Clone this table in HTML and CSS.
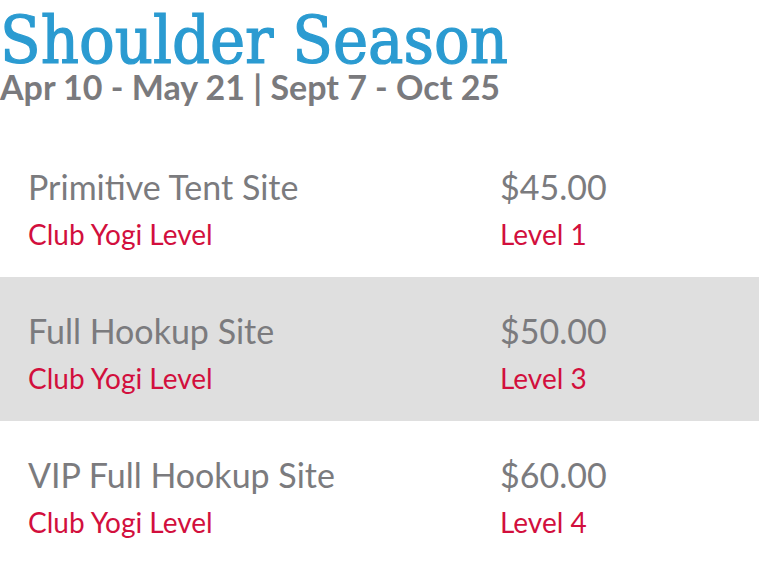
FILE: index.html
```html
<!DOCTYPE html>
<html lang="en">
<head>
<meta charset="utf-8">
<title>Shoulder Season</title>
<link rel="stylesheet" href="styles.css">
</head>
<body>
<header class="season">
  <h1 class="season-title">Shoulder Season</h1>
  <p class="season-dates">Apr 10 - May 21 | Sept 7 - Oct 25</p>
</header>
<section class="rates">
  <div class="rate">
    <div class="rate-col">
      <div class="rate-name">Primitive Tent Site</div>
      <div class="rate-sub">Club Yogi Level</div>
    </div>
    <div class="rate-col">
      <div class="rate-name">$45.00</div>
      <div class="rate-sub">Level 1</div>
    </div>
  </div>
  <div class="rate rate-alt">
    <div class="rate-col">
      <div class="rate-name">Full Hookup Site</div>
      <div class="rate-sub">Club Yogi Level</div>
    </div>
    <div class="rate-col">
      <div class="rate-name">$50.00</div>
      <div class="rate-sub">Level 3</div>
    </div>
  </div>
  <div class="rate">
    <div class="rate-col">
      <div class="rate-name">VIP Full Hookup Site</div>
      <div class="rate-sub">Club Yogi Level</div>
    </div>
    <div class="rate-col">
      <div class="rate-name">$60.00</div>
      <div class="rate-sub">Level 4</div>
    </div>
  </div>
</section>
</body>
</html>
```

FILE: styles.css
```css
html, body {
  margin: 0;
  padding: 0;
  background: #ffffff;
}

body {
  font-family: Lato, "Open Sans", sans-serif;
  width: 759px;
  overflow: hidden;
}

.season {
  display: flex;
  flex-direction: column;
  margin-bottom: 29px;
}

.season-title {
  margin: 0;
  padding-top: 12px;
  font-family: "DejaVu Serif", serif;
  font-stretch: condensed;
  font-weight: normal;
  font-size: 66px;
  line-height: 58px;
  -webkit-text-stroke: 1.2px #2b9bd1;
  color: #2b9bd1;
  white-space: nowrap;
}

.season-dates {
  margin: 0;
  font-weight: bold;
  font-size: 34px;
  line-height: 34px;
  color: #7a7a7d;
  white-space: nowrap;
}

.rate {
  display: grid;
  grid-template-columns: 472px 1fr;
  padding: 34px 28px 27px;
}

.rate-alt {
  background: #dfdfdf;
}

.rate-col {
  display: flex;
  flex-direction: column;
}

.rate-name {
  font-size: 34px;
  line-height: 40px;
  color: #7b7b7e;
  white-space: nowrap;
}

.rate-sub {
  margin-top: 11px;
  font-size: 28px;
  line-height: 32px;
  color: #d20f3d;
  white-space: nowrap;
}
```
